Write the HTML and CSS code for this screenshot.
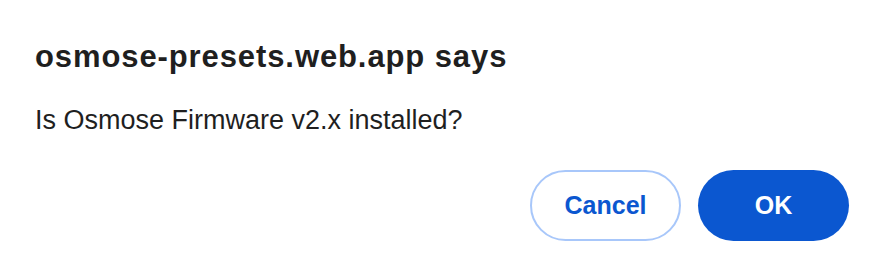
FILE: index.html
```html
<!DOCTYPE html>
<html lang="en">
<head>
<meta charset="utf-8">
<title>Dialog</title>
<link rel="stylesheet" href="styles.css">
</head>
<body>
<div class="dialog">
  <h1 class="title">osmose-presets.web.app says</h1>
  <p class="message">Is Osmose Firmware v2.x installed?</p>
  <div class="actions">
    <button class="btn btn-secondary">Cancel</button>
    <button class="btn btn-primary">OK</button>
  </div>
</div>
</body>
</html>
```

FILE: styles.css
```css
html, body {
  margin: 0;
  padding: 0;
  background: #ffffff;
}

body {
  font-family: "Liberation Sans", Arial, sans-serif;
  color: #1f1f1f;
}

.dialog {
  padding: 39px 29px 0 35px;
}

.title {
  margin: 0;
  font-size: 31px;
  line-height: 36px;
  font-weight: 700;
  letter-spacing: 0.9px;
}

.message {
  margin: 29px 0 0 0;
  font-size: 27px;
  line-height: 32px;
  font-weight: 400;
}

.actions {
  margin-top: 34px;
  display: flex;
  justify-content: flex-end;
  gap: 17px;
}

.btn {
  box-sizing: border-box;
  height: 71px;
  width: 151px;
  border-radius: 36px;
  font-family: "Liberation Sans", Arial, sans-serif;
  font-size: 25px;
  font-weight: 700;
  padding: 0;
  cursor: pointer;
}

.btn-secondary {
  background: #ffffff;
  color: #0b57d0;
  border: 2px solid #a8c7fa;
}

.btn-primary {
  background: #0b57d0;
  color: #ffffff;
  border: none;
}
```
